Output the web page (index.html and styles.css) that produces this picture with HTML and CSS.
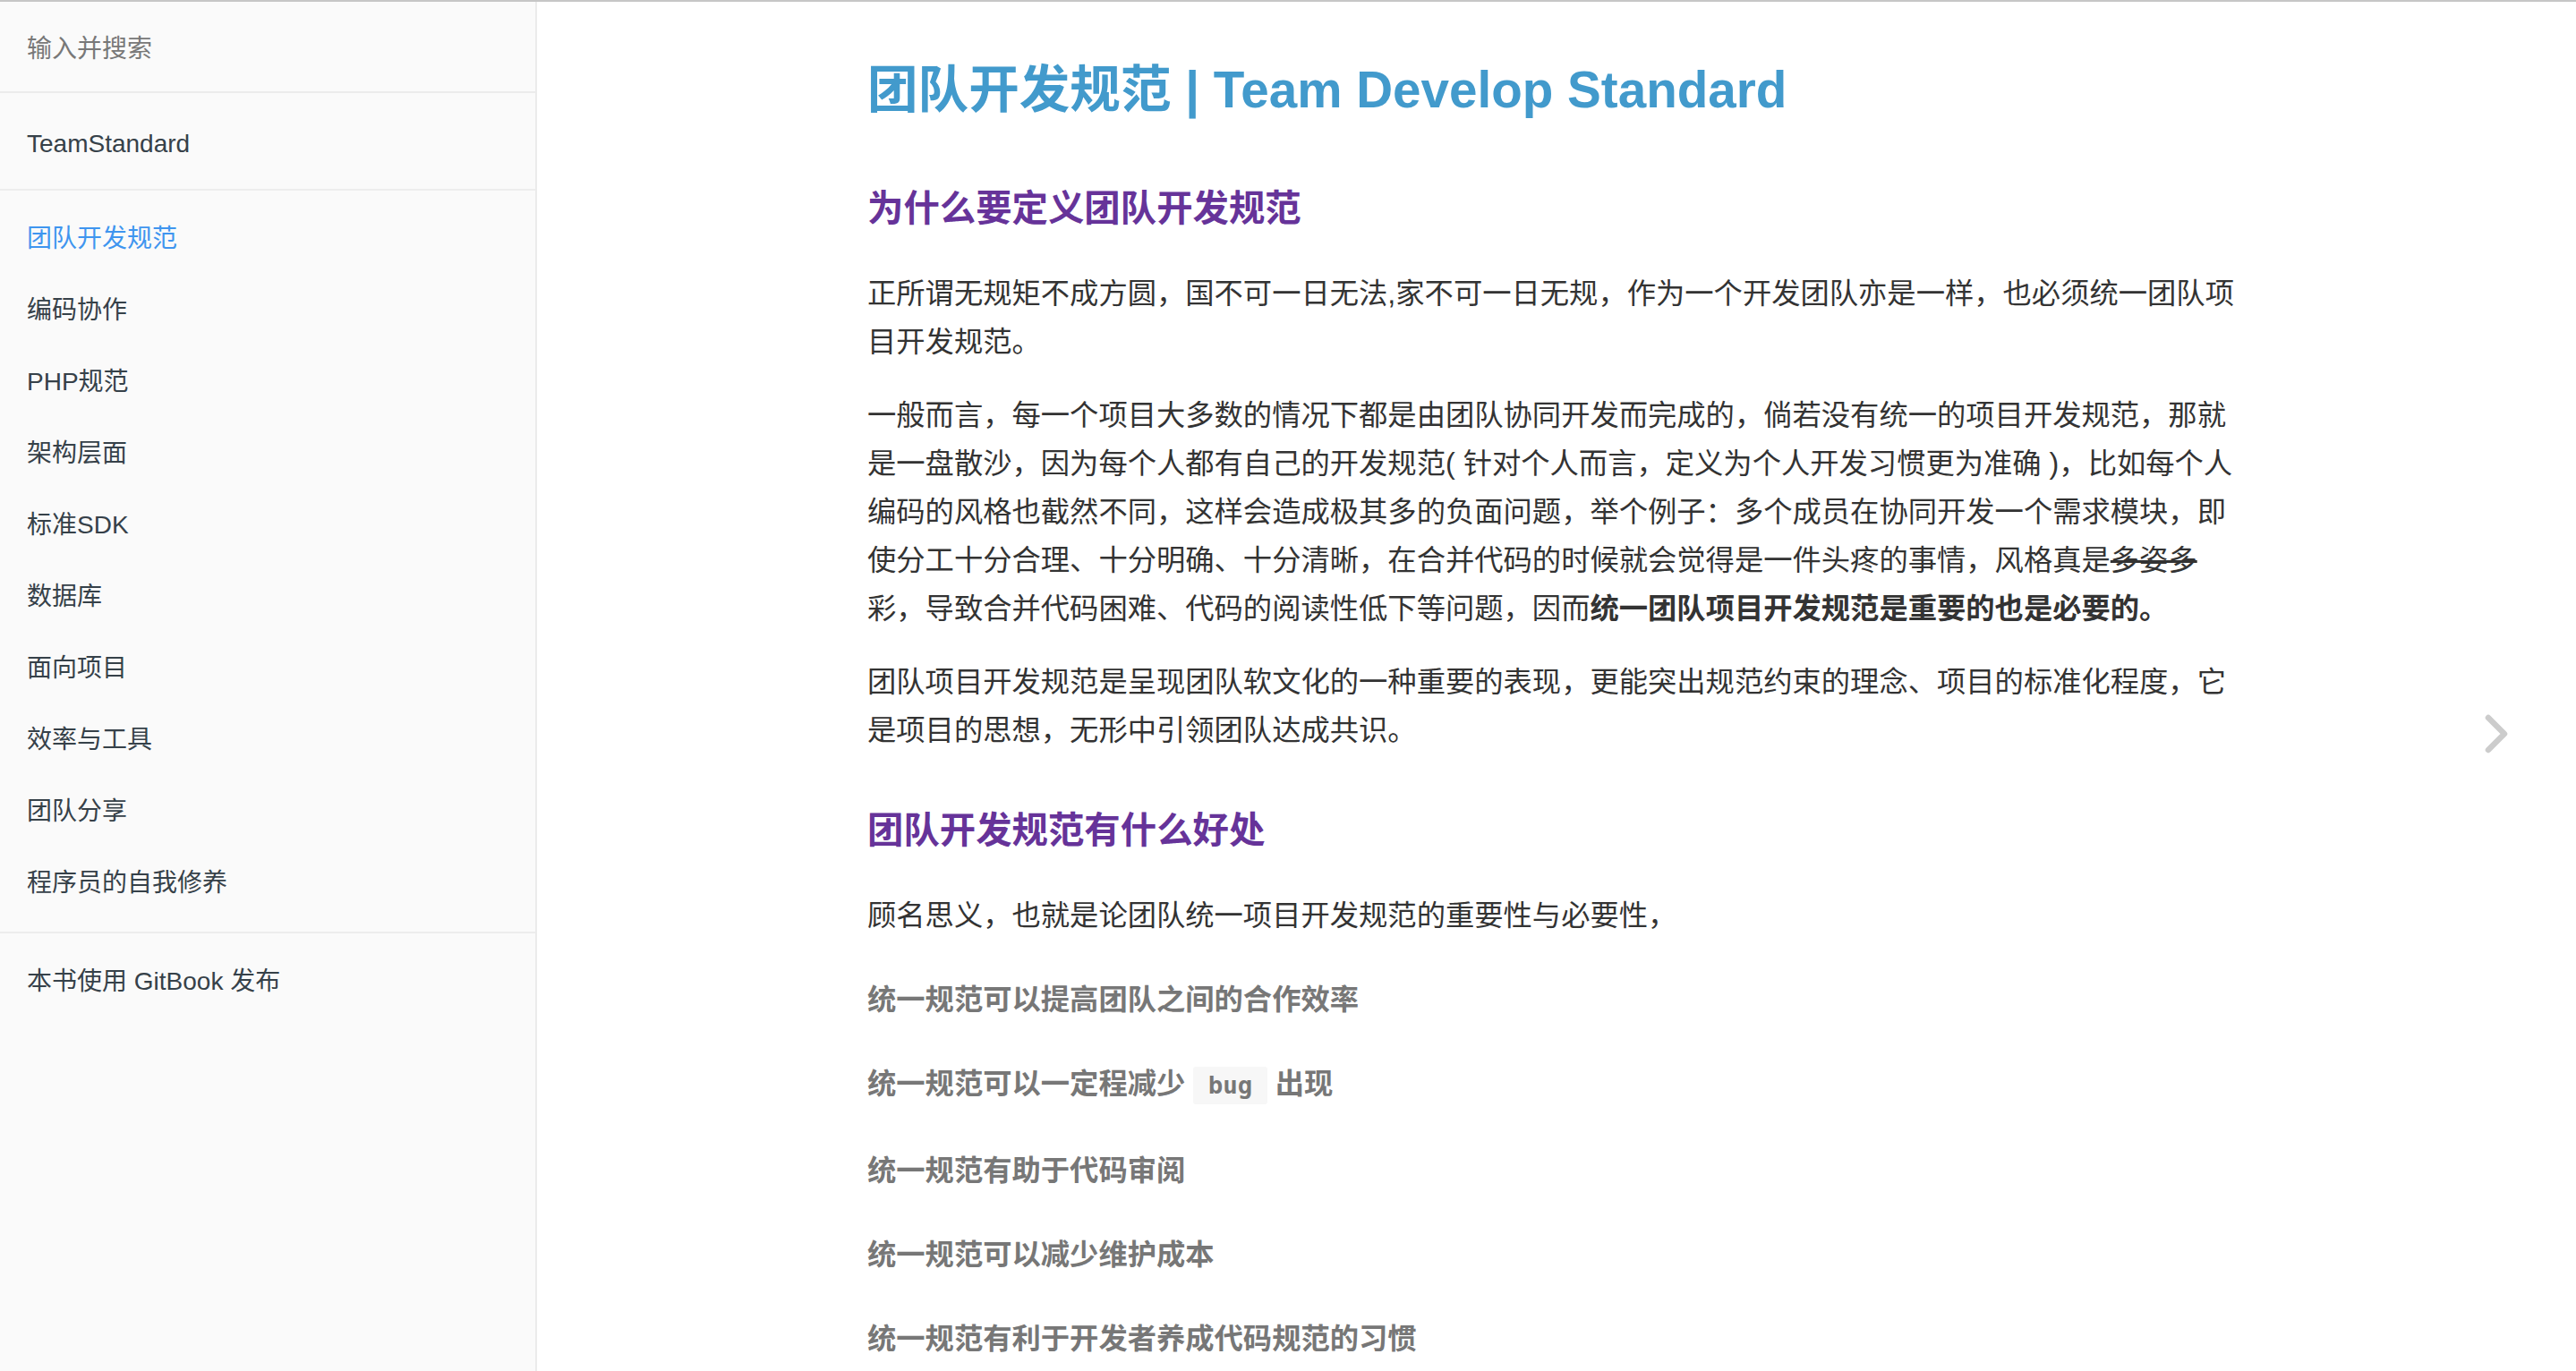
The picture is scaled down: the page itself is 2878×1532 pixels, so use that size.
FILE: index.html
```html
<!DOCTYPE html>
<html lang="zh-CN">
<head>
<meta charset="utf-8">
<title>团队开发规范 | Team Develop Standard</title>
<link rel="stylesheet" href="styles.css">
</head>
<body>
<div class="book">
  <aside class="summary">
    <div class="search"><span class="search-ph">输入并搜索</span></div>
    <ul class="toc">
      <li class="toc-item book-title"><a>TeamStandard</a></li>
      <li class="divider divider-first"></li>
      <li class="toc-item active"><a>团队开发规范</a></li>
      <li class="toc-item"><a>编码协作</a></li>
      <li class="toc-item"><a>PHP规范</a></li>
      <li class="toc-item"><a>架构层面</a></li>
      <li class="toc-item"><a>标准SDK</a></li>
      <li class="toc-item"><a>数据库</a></li>
      <li class="toc-item"><a>面向项目</a></li>
      <li class="toc-item"><a>效率与工具</a></li>
      <li class="toc-item"><a>团队分享</a></li>
      <li class="toc-item"><a>程序员的自我修养</a></li>
      <li class="divider"></li>
      <li class="toc-item"><a>本书使用 GitBook 发布</a></li>
    </ul>
  </aside>
  <main class="book-body">
    <div class="page-inner">
      <section class="markdown">
        <h1 class="doc-title">团队开发规范 | Team Develop Standard</h1>
        <h4 class="sec-title">为什么要定义团队开发规范</h4>
        <p>正所谓无规矩不成方圆，国不可一日无法,家不可一日无规，作为一个开发团队亦是一样，也必须统一团队项目开发规范。</p>
        <p>一般而言，每一个项目大多数的情况下都是由团队协同开发而完成的，倘若没有统一的项目开发规范，那就是一盘散沙，因为每个人都有自己的开发规范( 针对个人而言，定义为个人开发习惯更为准确 )，比如每个人编码的风格也截然不同，这样会造成极其多的负面问题，举个例子：多个成员在协同开发一个需求模块，即使分工十分合理、十分明确、十分清晰，在合并代码的时候就会觉得是一件头疼的事情，风格真是<del>多姿多</del>彩，导致合并代码困难、代码的阅读性低下等问题，因而<strong>统一团队项目开发规范是重要的也是必要的。</strong></p>
        <p>团队项目开发规范是呈现团队软文化的一种重要的表现，更能突出规范约束的理念、项目的标准化程度，它是项目的思想，无形中引领团队达成共识。</p>
        <h4 class="sec-title">团队开发规范有什么好处</h4>
        <p>顾名思义，也就是论团队统一项目开发规范的重要性与必要性，</p>
        <h6 class="point">统一规范可以提高团队之间的合作效率</h6>
        <h6 class="point">统一规范可以一定程减少 <code>bug</code> 出现</h6>
        <h6 class="point">统一规范有助于代码审阅</h6>
        <h6 class="point">统一规范可以减少维护成本</h6>
        <h6 class="point">统一规范有利于开发者养成代码规范的习惯</h6>
      </section>
    </div>
    <a class="nav-next" aria-label="下一页">
      <svg class="nav-icon" width="30" height="50" viewBox="0 0 30 50">
        <polyline points="7,7 25,25 7,43" fill="none" stroke="#cccccc" stroke-width="6.5" stroke-linecap="round" stroke-linejoin="round"/>
      </svg>
    </a>
  </main>
</div>
</body>
</html>
```

FILE: styles.css
```css
html, body {
  margin: 0;
  padding: 0;
  height: 100%;
}

body {
  box-sizing: border-box;
  border-top: 2px solid #c6c6c6;
  background: #ffffff;
  font-family: "Liberation Sans", "Noto Sans CJK SC", sans-serif;
  overflow: hidden;
}

.book {
  display: flex;
  height: 100%;
}

/* ---------- sidebar ---------- */
.summary {
  width: 598px;
  flex: none;
  background: #fafafa;
  border-right: 2px solid #ebebeb;
}

.search {
  height: 100px;
  border-bottom: 2px solid #ececec;
  padding: 0 30px;
  display: flex;
  align-items: center;
}

.search-ph {
  font-size: 28px;
  color: #787878;
}

.toc {
  list-style: none;
  margin: 0;
  padding: 17px 0 0;
}

.toc-item a {
  display: block;
  padding: 20px 30px;
  font-size: 28px;
  line-height: 40px;
  color: #364149;
  white-space: nowrap;
  overflow: hidden;
  text-overflow: ellipsis;
}

.toc-item.active a {
  color: #3f95ef;
}

.divider {
  height: 2px;
  margin: 14px 0;
  background: #ededed;
}

.divider-first {
  margin-top: 10px;
}

/* ---------- main ---------- */
.book-body {
  flex: 1;
  min-width: 0;
  position: relative;
}

.page-inner {
  box-sizing: border-box;
  max-width: 1600px;
  margin: 0 auto;
  padding: 51px 30px 80px;
}

.markdown {
  font-size: 32.3px;
  line-height: 54.2px;
  color: #333333;
}

.doc-title {
  font-size: 56.6px;
  line-height: 95.2px;
  margin: 0 0 47.6px;
  color: #429acc;
  font-weight: bold;
}

.sec-title {
  font-size: 40.4px;
  line-height: 68px;
  margin: 51px 0 34px;
  color: #663399;
  font-weight: bold;
}

.markdown p {
  margin: 0 0 27px;
}

.markdown del {
  text-decoration: line-through;
}

.markdown strong {
  font-weight: bold;
}

.point {
  font-size: 32.3px;
  line-height: 54.2px;
  margin: 40px 0 27px;
  color: #777777;
  font-weight: bold;
}

.markdown code {
  font-family: "DejaVu Sans Mono", "Liberation Mono", monospace;
  font-size: 0.85em;
  padding: 0.2em;
  background: #f7f7f7;
  border-radius: 3px;
}

.markdown code::before,
.markdown code::after {
  content: "\00a0";
  letter-spacing: -0.2em;
}

.nav-next {
  position: absolute;
  right: 0;
  top: 106px;
  bottom: 0;
  width: 180px;
  display: flex;
  align-items: center;
  justify-content: center;
}

.nav-icon {
  display: block;
}
```
